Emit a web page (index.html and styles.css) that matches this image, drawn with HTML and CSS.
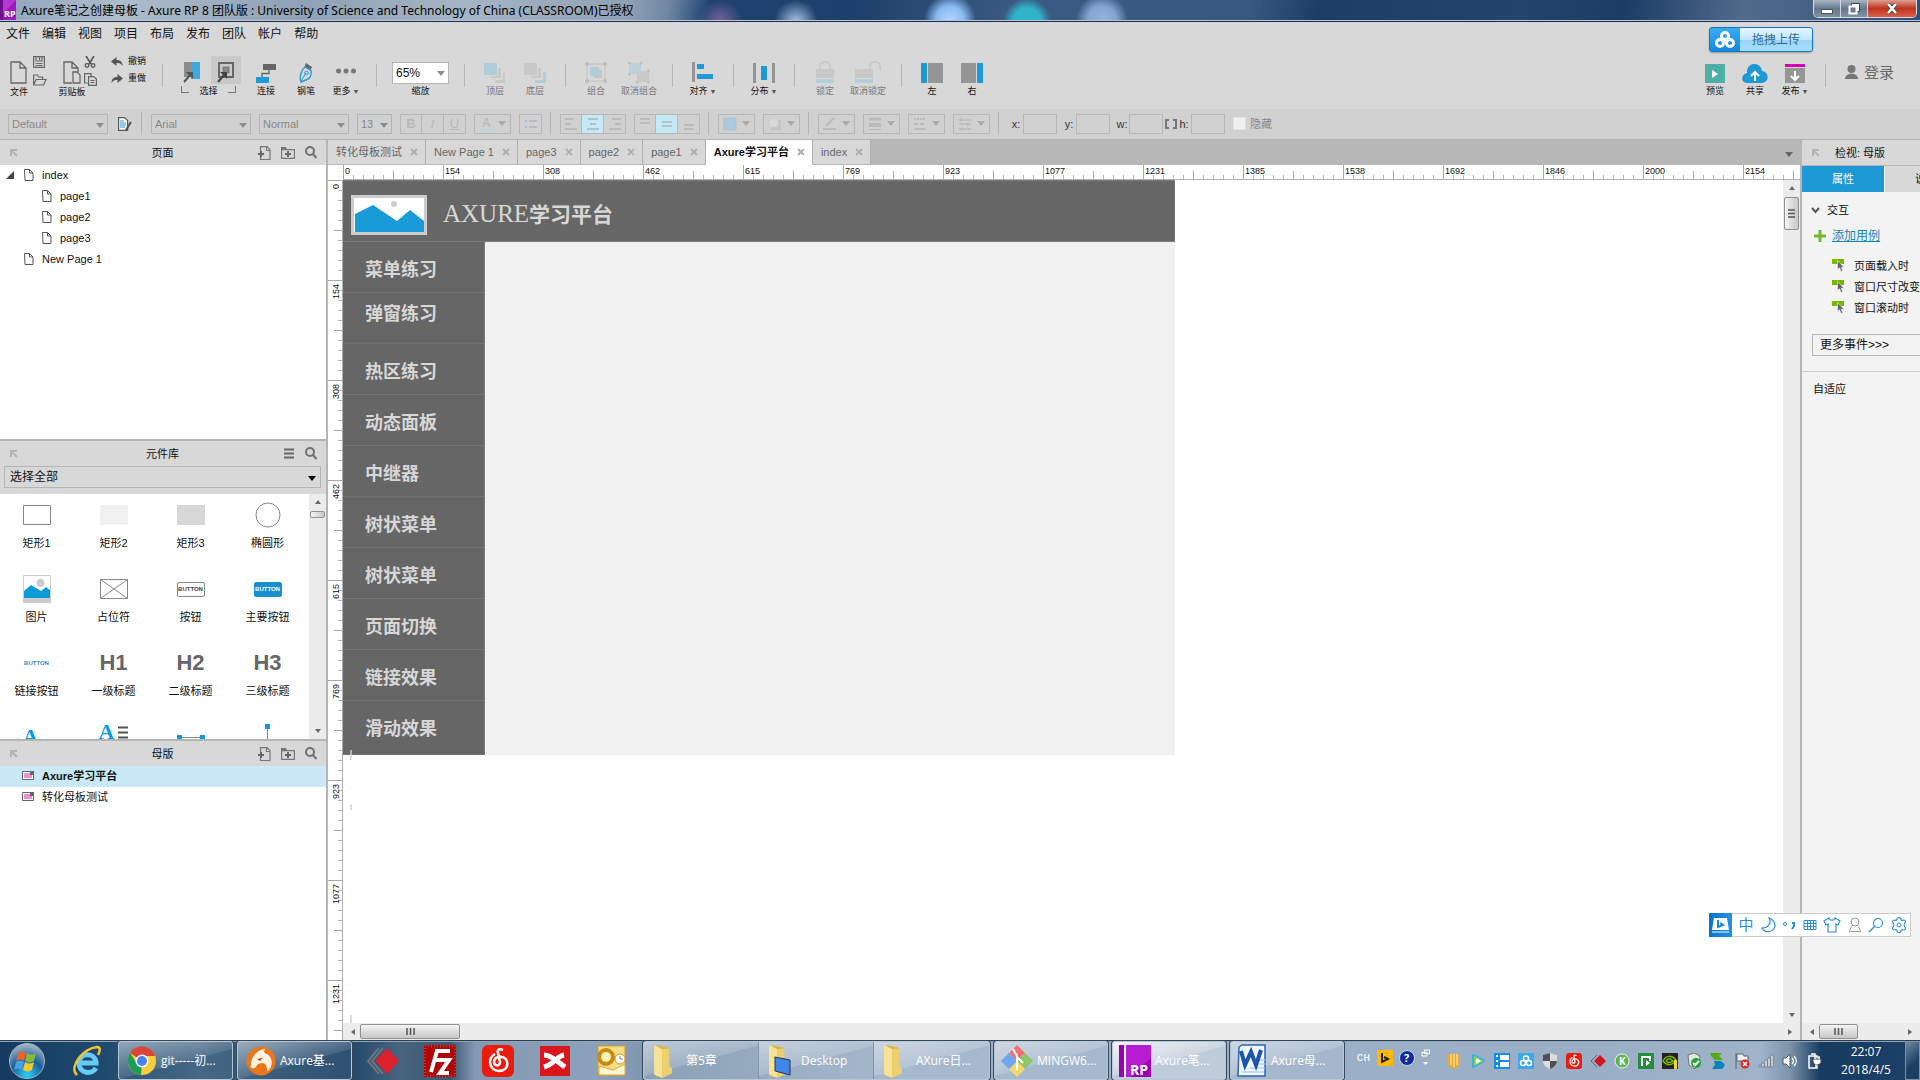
FILE: index.html
```html
<!DOCTYPE html>
<html lang="zh-CN">
<head>
    <meta charset="UTF-8">
    <meta name="viewport" content="width=device-width, initial-scale=1.0">
    <title>Axure笔记之创建母板 - Axure RP 8 团队版</title>
    <link rel="stylesheet" href="styles.css">
</head>
<body>
    <!-- shared icons -->
    <svg class="defs" width="0" height="0" aria-hidden="true">
        <symbol id="i-page" viewBox="0 0 10 12"><path d="M.5 .5h5l3.500 3.500v7.500h-8zM5.500 .5v3.500h3.500" fill="#fff" stroke="#555"/></symbol>
        <symbol id="i-master" viewBox="0 0 12 9"><path d="M.5 .5h11v8H.5z" fill="#fff" stroke="#666"/><path d="M2 2h6l2 2v3H2z" fill="#ee8fd8"/><path d="M8 0v4h4V0z" fill="#666"/></symbol>
        <symbol id="i-search" viewBox="0 0 12 13"><circle cx="5" cy="5" r="4" fill="none" stroke="#707070" stroke-width="2"/><path d="M8 8l3.500 4" stroke="#707070" stroke-width="2.200"/></symbol>
        <symbol id="i-addpage" viewBox="0 0 13 14"><path d="M2.500 5V.6h6.500l3 3v9.900H2.500V11M8.500 1v3.500H12" fill="none" stroke="#777" stroke-width="1.200"/><path d="M0 8h6M3 5v6" stroke="#666" stroke-width="2"/></symbol>
        <symbol id="i-addfolder" viewBox="0 0 14 12"><path d="M.6 11.400V2.600h12.800v8.800z" fill="none" stroke="#777" stroke-width="1.200"/><path d="M0 0h5l1 2.500H0z" fill="#777"/><path d="M4 7h6M7 4v6" stroke="#666" stroke-width="2"/></symbol>
        <symbol id="i-pin" viewBox="0 0 8 8"><path d="M1 7V1h6M1.500 1.500L7 7" fill="none" stroke="#b4b4b4" stroke-width="2"/></symbol>
        <symbol id="i-close" viewBox="0 0 8 8"><path d="M1 1l6 6M7 1L1 7" stroke="#b0b0b0" stroke-width="2"/></symbol>
        <symbol id="i-event" viewBox="0 0 13 13"><path d="M0 0h12v5H0z" fill="#77b800"/><path d="M5.500 1.500v9l2-1.800 1.500 3.800 1.800-.8-1.600-3.500h2.800z" fill="#666" stroke="#f3f3f3" stroke-width=".6"/></symbol>
        <symbol id="i-folder" viewBox="0 0 24 38"><path d="M5 1l13 3v27l-6 5L4 37z" fill="#d9b653"/><path d="M2 1l9 5v32l-9-4z" fill="#f7e398"/><path d="M11 6l8-1v20l3 2v6l-11 5z" fill="#eccf70"/></symbol>
        <symbol id="i-netease" viewBox="0 0 32 32"><rect width="32" height="32" rx="6" fill="#ea1c0d"/><path d="M21 5c-4-2-6 0-5 3l2 9c0 5-6 4-6 0s4-6 8-5c8 2 7 14-3 14S5 13 13 9" fill="none" stroke="#fff" stroke-width="2.500"/></symbol>
    </svg>

    <header class="titlebar">
        <svg width="16" height="20" viewBox="0 0 16 20"><path d="M0 0h16v20H0z" fill="#9a1cb8"/><path d="M0 0h3v20H0z" fill="#6d0f8c"/><path d="M3 0h13l-13 14z" fill="#b936d4"/><text x="4" y="17" font-size="9" font-weight="bold" fill="#fff">RP</text></svg>
        <h1>Axure笔记之创建母板 - Axure RP 8 团队版 : University of Science and Technology of China (CLASSROOM)已授权</h1>
        <div class="window-btns">
            <button aria-label="最小化"><svg width="12" height="12"><rect x=".5" y="6.500" width="11" height="4" fill="#fff" stroke="#555"/></svg></button>
            <button aria-label="还原"><svg width="12" height="12"><path d="M3.500 3V.5h8v8H9" fill="#fff" stroke="#444"/><rect x="1.500" y="3.500" width="7" height="7" fill="#667a92" stroke="#fff" stroke-width="2"/></svg></button>
            <button class="close" aria-label="关闭"><svg width="12" height="11"><path d="M2 1l8 9M10 1L2 10" stroke="#444" stroke-width="4"/><path d="M2 1l8 9M10 1L2 10" stroke="#fff" stroke-width="2.500"/></svg></button>
        </div>
    </header>

    <nav class="menu">
        <a href="#">文件</a><a href="#">编辑</a><a href="#">视图</a><a href="#">项目</a><a href="#">布局</a><a href="#">发布</a><a href="#">团队</a><a href="#">帐户</a><a href="#">帮助</a>
    </nav>

    <div class="toolbar">
        <div class="file-tools">
            <button class="tool big">
                <svg width="18" height="24" viewBox="0 0 18 24"><path d="M1 1h9l6 6v15H1zM10 1v6h6" fill="none" stroke="#666" stroke-width="1.300"/></svg>
                <span>文件</span>
            </button>
            <div class="mini">
                <button aria-label="保存"><svg width="12" height="12"><path d="M.6 .6h10.800v10.800H.6zM3 1v4h6V1M6.500 1v3M2.500 7.500h7M2.500 9.500h7" fill="none" stroke="#666" stroke-width="1.200"/></svg></button>
                <button aria-label="打开"><svg width="14" height="12"><path d="M.6 11V1h4l1 2h4v2.500M.6 11l2.500-5.500h10L10.500 11z" fill="none" stroke="#666" stroke-width="1.200"/></svg></button>
            </div>
            <button class="tool big clip">
                <svg width="18" height="24" viewBox="0 0 18 24"><path d="M9 22H1V1h8l6 6v4M9 1v6h6M10 11h4l3 3v8h-7z" fill="none" stroke="#666" stroke-width="1.300"/></svg>
                <span>剪贴板</span>
            </button>
            <div class="mini">
                <button aria-label="剪切"><svg width="12" height="12"><path d="M2 0l5 8M10 0L5 8" stroke="#555" stroke-width="1.600"/><circle cx="3" cy="9.500" r="1.800" fill="none" stroke="#555" stroke-width="1.300"/><circle cx="9" cy="9.500" r="1.800" fill="none" stroke="#555" stroke-width="1.300"/></svg></button>
                <button aria-label="复制"><svg width="13" height="13"><path d="M4 10H.6V.6h6.500V3M4.600 3.600h5l2.800 2.500v6.300H4.600zM6.500 7.500h4M6.500 9.500h4" fill="none" stroke="#666" stroke-width="1.200"/></svg></button>
            </div>
            <div class="undo">
                <button><svg width="12" height="10"><path d="M0 4.500L5.500 0v3c4 0 6 2 6 6-1.500-2.500-3-3-6-3v3z" fill="#555"/></svg>撤销</button>
                <button><svg width="12" height="10"><path d="M12 4.500L6.500 0v3c-4 0-6 2-6 6 1.500-2.500 3-3 6-3v3z" fill="#555"/></svg>重做</button>
            </div>
        </div>
        <i class="sep"></i>
        <div class="select-tools">
            <div class="pair">
                <button aria-label="相交选择"><svg width="18" height="24" viewBox="0 0 18 24"><path d="M1 2h7v15H1z" fill="#8c8c8c"/><path d="M8 2h9v17H8z" fill="#3fa9dc"/><path d="M1 22l7-8" stroke="#555" stroke-width="2"/><path d="M3 12h7v7z" fill="#555"/></svg></button>
                <button class="on" aria-label="包含选择"><svg width="18" height="24" viewBox="0 0 18 24"><path d="M2 3h14v14H2z" fill="none" stroke="#666" stroke-width="2"/><path d="M6 7h6v6H6z" fill="#888" stroke="#777"/><path d="M1 22l7-8" stroke="#444" stroke-width="2"/><path d="M3 12h7v7z" fill="#444"/></svg></button>
            </div>
            <div class="pair-label"><i></i>选择<i class="r"></i></div>
        </div>
        <button class="tool"><svg width="20" height="24" viewBox="0 0 20 24"><path d="M7 3h13v6H7z" fill="#666"/><path d="M0 16h13v6H0z" fill="#1d9ad6"/><path d="M13 9v3.500H6V16" fill="none" stroke="#666" stroke-width="1.300"/></svg><span>连接</span></button>
        <button class="tool"><svg width="16" height="24" viewBox="0 0 16 24"><path d="M8 2l6 4-1.500 3-6-3.500z" fill="#666"/><path d="M7 6l6 3.500c1 4-1 8-4 9L3 21c-2-5 0-12 4-15z" fill="none" stroke="#2a9bd2" stroke-width="1.400"/><path d="M3 20l5-8" stroke="#2a9bd2"/><circle cx="8.500" cy="12" r="1.800" fill="none" stroke="#2a9bd2"/></svg><span>钢笔</span></button>
        <button class="tool"><svg width="20" height="24" viewBox="0 0 20 24"><g fill="#777"><circle cx="2.500" cy="10" r="2.500"/><circle cx="10" cy="10" r="2.500"/><circle cx="17.500" cy="10" r="2.500"/></g></svg><span>更多<b>▼</b></span></button>
        <i class="sep"></i>
        <div class="zoom">
            <div class="pick"><select id="zoom"><option>65%</option></select></div>
            <label for="zoom">缩放</label>
        </div>
        <i class="sep"></i>
        <button class="tool" disabled><svg width="22" height="24" viewBox="0 0 22 24"><path d="M0 2h13v12H0z" fill="#b1cdda"/><path d="M14 7h3v10H7v-2h7zM19 12h2v10H11v-3h8z" fill="#c8c8c8"/></svg><span>顶层</span></button>
        <button class="tool" disabled><svg width="22" height="24" viewBox="0 0 22 24"><path d="M0 2h13v12H0zM14 7h3v10H7v-2h7z" fill="#c8c8c8"/><path d="M19 11h3v11H11v-3h8z" fill="#b1cdda"/></svg><span>底层</span></button>
        <i class="sep"></i>
        <button class="tool" disabled><svg width="22" height="24" viewBox="0 0 22 24"><path d="M2 3h18v17H2z" fill="none" stroke="#c0c0c0"/><path d="M9 9h8v8H9z" fill="#c6c6c6"/><path d="M5 6h9v9H5z" fill="#b1cdda"/><g fill="#bcbcbc"><circle cx="2" cy="3" r="2"/><circle cx="20" cy="3" r="2"/><circle cx="2" cy="20" r="2"/><circle cx="20" cy="20" r="2"/></g></svg><span>组合</span></button>
        <button class="tool wide" disabled><svg width="22" height="24" viewBox="0 0 22 24"><path d="M1 2h12v11H1z" fill="#bdd1da"/><path d="M9 10h12v11H9z" fill="#c9c9c9"/><g fill="#bfbfbf"><circle cx="1.500" cy="2" r="1.500"/><circle cx="13" cy="2" r="1.500"/><circle cx="1.500" cy="13" r="1.500"/><circle cx="9" cy="21" r="1.500"/><circle cx="20.500" cy="10" r="1.500"/><circle cx="20.500" cy="21" r="1.500"/></g></svg><span>取消组合</span></button>
        <i class="sep"></i>
        <button class="tool"><svg width="22" height="24" viewBox="0 0 22 24"><path d="M0 1h3v20H0z" fill="#959595"/><path d="M5 3h7v5H5zM5 13h16v5H5z" fill="#1d9ad6"/></svg><span>对齐<b>▼</b></span></button>
        <i class="sep"></i>
        <button class="tool"><svg width="22" height="24" viewBox="0 0 22 24"><path d="M0 2h3v20H0zM19 2h3v20h-3z" fill="#959595"/><path d="M8 5h6v14H8z" fill="#1d9ad6"/></svg><span>分布<b>▼</b></span></button>
        <i class="sep"></i>
        <button class="tool" disabled><svg width="18" height="24" viewBox="0 0 18 24"><path d="M4 9V6c0-7 10-7 10 0v3" fill="none" stroke="#cacaca" stroke-width="2"/><path d="M0 8h18v9H0z" fill="#c8c8c8"/><path d="M0 18h18v4H0z" fill="#b3cdd9"/></svg><span>锁定</span></button>
        <button class="tool wide" disabled><svg width="26" height="24" viewBox="0 0 26 24"><path d="M15 9V6c0-7 10-7 10 0v3" fill="none" stroke="#cacaca" stroke-width="2"/><path d="M0 8h18v9H0z" fill="#c8c8c8"/><path d="M0 18h18v4H0z" fill="#b3cdd9"/></svg><span>取消锁定</span></button>
        <i class="sep"></i>
        <button class="tool"><svg width="22" height="24" viewBox="0 0 22 24"><path d="M0 2h6v20H0z" fill="#1d9ad6"/><path d="M7 2h15v20H7z" fill="#959595"/></svg><span>左</span></button>
        <button class="tool"><svg width="22" height="24" viewBox="0 0 22 24"><path d="M16 2h6v20h-6z" fill="#1d9ad6"/><path d="M0 2h15v20H0z" fill="#959595"/></svg><span>右</span></button>

        <div class="share-tools">
            <button class="tool"><svg width="20" height="24" viewBox="0 0 20 24"><path d="M0 3h20v19H0z" fill="#4dafa5"/><path d="M7 9l6 4-6 4z" fill="#fff"/></svg><span>预览</span></button>
            <button class="tool"><svg width="26" height="24" viewBox="0 0 26 24"><path d="M6 22c-8 0-7-9-1-10C4 1 19 0 20 10c8 1 7 12 0 12z" fill="#1d9ad6"/><path d="M13 20v-9m-4 4l4-4 4 4" fill="none" stroke="#fff" stroke-width="2"/></svg><span>共享</span></button>
            <button class="tool"><svg width="20" height="24" viewBox="0 0 20 24"><path d="M0 3h20v3H0z" fill="#d400b5"/><path d="M0 7h20v15H0z" fill="#959595"/><path d="M10 10v8m-4-3l4 4 4-4" fill="none" stroke="#fff" stroke-width="2"/></svg><span>发布<b>▼</b></span></button>
            <i class="sep"></i>
            <a class="login" href="#"><svg width="13" height="14"><circle cx="6.500" cy="4" r="4" fill="#777"/><path d="M0 14c0-7 13-7 13 0z" fill="#777"/></svg>登录</a>
        </div>
    </div>

    <div class="stylebar">
        <div class="pick w100"><select aria-label="样式" disabled><option>Default</option></select></div>
        <button class="plain" aria-label="管理样式"><svg width="14" height="14"><path d="M.6 .6h6l3 3v9.800h-9z" fill="#fff" stroke="#555" stroke-width="1.200"/><path d="M2 4h4M2 6h6M2 8h6M2 10h5" stroke="#2a9bd2"/><path d="M8 13l5-8" stroke="#555" stroke-width="2"/></svg></button>
        <i class="sep"></i>
        <div class="pick w100"><select aria-label="字体" disabled><option>Arial</option></select></div>
        <div class="pick w90"><select aria-label="字形" disabled><option>Normal</option></select></div>
        <div class="pick w35"><select aria-label="字号" disabled><option>13</option></select></div>
        <div class="group"><button disabled><b>B</b></button><button disabled><em>I</em></button><button disabled><u>U</u></button></div>
        <button class="drop" disabled aria-label="字体颜色"><svg width="16" height="14"><text x="3" y="10" font-size="12" font-weight="bold" fill="#b9b9b9">A</text><path d="M1 12h13v2H1z" fill="#bdd4e0"/></svg></button>
        <div class="group"><button disabled aria-label="列表"><svg width="14" height="12"><path d="M1 3h2M1 9h2" stroke="#9cc3d8" stroke-width="2"/><path d="M5 3h8M5 9h8" stroke="#bbb" stroke-width="2"/></svg></button></div>
        <i class="sep"></i>
        <div class="group">
            <button disabled aria-label="左对齐"><svg width="14" height="14"><path d="M1 2h9M1 7h6M1 12h12" stroke="#bbb" stroke-width="2"/></svg></button>
            <button disabled class="on" aria-label="居中"><svg width="14" height="14"><path d="M2 2h10M4 7h6M1 12h12" stroke="#abc3cd" stroke-width="2"/></svg></button>
            <button disabled aria-label="右对齐"><svg width="14" height="14"><path d="M4 2h9M7 7h6M1 12h12" stroke="#bbb" stroke-width="2"/></svg></button>
        </div>
        <div class="group">
            <button disabled aria-label="顶部"><svg width="12" height="14"><path d="M1 2h10M1 6h10" stroke="#bbb" stroke-width="2"/></svg></button>
            <button disabled class="on" aria-label="中部"><svg width="12" height="14"><path d="M1 5h10M1 9h10" stroke="#abc3cd" stroke-width="2"/></svg></button>
            <button disabled aria-label="底部"><svg width="12" height="14"><path d="M1 8h10M1 12h10" stroke="#bbb" stroke-width="2"/></svg></button>
        </div>
        <i class="sep"></i>
        <button class="drop" disabled aria-label="填充"><svg width="14" height="14"><path d="M1 1h12v12H1z" fill="#a9c9e2" stroke="#bbb"/></svg></button>
        <button class="drop" disabled aria-label="阴影"><svg width="14" height="14"><path d="M3 3h10v10H3z" fill="#c4c4c4"/><path d="M1 1h9v9H1z" fill="#d8d8d8" stroke="#ccc"/></svg></button>
        <i class="sep"></i>
        <button class="drop" disabled aria-label="线条颜色"><svg width="14" height="14"><path d="M3 9l8-8" stroke="#bbb" stroke-width="2"/><path d="M0 11h13v2H0z" fill="#bbb"/></svg></button>
        <button class="drop" disabled aria-label="线宽"><svg width="14" height="14"><path d="M1 2h12" stroke="#bbb" stroke-width="3"/><path d="M1 8h12" stroke="#bbb" stroke-width="4"/><path d="M1 12.500h12" stroke="#bbb"/></svg></button>
        <button class="drop" disabled aria-label="线型"><svg width="14" height="14"><path d="M1 2h12" stroke="#bbb" stroke-width="2" stroke-dasharray="2 1"/><path d="M1 7h12" stroke="#bbb" stroke-width="2" stroke-dasharray="4 2"/><path d="M1 12h12" stroke="#bbb" stroke-width="2"/></svg></button>
        <button class="drop" disabled aria-label="箭头"><svg width="14" height="14"><path d="M1 3h12M1 7h12M1 12h12M3 1v4M10 5v5M4 10v4" stroke="#bbb" stroke-width="1.300"/></svg></button>
        <i class="sep"></i>
        <div class="coord"><label for="px">x:</label><input id="px" type="text" disabled></div>
        <div class="coord"><label for="py">y:</label><input id="py" type="text" disabled></div>
        <div class="coord"><label for="pw">w:</label><input id="pw" type="text" disabled></div>
        <div class="coord last"><svg width="12" height="10"><path d="M4 1H1v8h3M8 1h3v8H8" fill="none" stroke="#777" stroke-width="2"/></svg><label for="ph">h:</label><input id="ph" type="text" disabled></div>
        <label class="hide"><input type="checkbox" disabled>隐藏</label>
    </div>

    <div class="workspace">
        <aside class="left">
            <section class="pane pages">
                <div class="pane-head"><svg width="8" height="8"><use href="#i-pin"/></svg><h2>页面</h2><div class="pane-icons"><svg width="13" height="14"><use href="#i-addpage"/></svg><svg width="14" height="12"><use href="#i-addfolder"/></svg><svg width="12" height="13"><use href="#i-search"/></svg></div></div>
                <ul class="tree">
                    <li><svg class="twisty" width="8" height="8"><path d="M8 0v8H0z" fill="#444"/></svg><svg width="10" height="12"><use href="#i-page"/></svg>index</li>
                    <li class="child"><svg width="10" height="12"><use href="#i-page"/></svg>page1</li>
                    <li class="child"><svg width="10" height="12"><use href="#i-page"/></svg>page2</li>
                    <li class="child"><svg width="10" height="12"><use href="#i-page"/></svg>page3</li>
                    <li class="leaf"><svg width="10" height="12"><use href="#i-page"/></svg>New Page 1</li>
                </ul>
            </section>
            <section class="pane library">
                <div class="pane-head"><svg width="8" height="8"><use href="#i-pin"/></svg><h2>元件库</h2><div class="pane-icons"><svg width="12" height="11"><path d="M1 1.500h10M1 5.500h10M1 9.500h10" stroke="#666" stroke-width="2"/></svg><svg width="12" height="13"><use href="#i-search"/></svg></div></div>
                <div class="pick lib-pick"><select aria-label="元件库"><option>选择全部</option></select></div>
                <div class="lib-body">
                    <div class="widgets">
                        <div><svg width="28" height="28"><path d="M.5 4.500h27v19H.5z" fill="#fff" stroke="#888"/></svg>矩形1</div>
                        <div><svg width="28" height="28"><path d="M0 4h28v20H0z" fill="#f1f1f1"/></svg>矩形2</div>
                        <div><svg width="28" height="28"><path d="M0 4h28v20H0z" fill="#d7d7d7"/></svg>矩形3</div>
                        <div><svg width="28" height="28"><circle cx="14" cy="14" r="12" fill="#fff" stroke="#888"/></svg>椭圆形</div>
                        <div><svg width="28" height="28"><path d="M.5 .5h27v27H.5z" fill="#fff" stroke="#ccc"/><circle cx="17.500" cy="8" r="4" fill="#ccc"/><path d="M1 16l7-6 10 6 5-4 4 3v8H1z" fill="#0a9bd8"/><path d="M0 23h28v5H0z" fill="#ccc"/></svg>图片</div>
                        <div><svg width="28" height="28"><path d="M.5 4.500h27v19H.5zM.5 4.500l27 19M27.500 4.500l-27 19" fill="#fff" stroke="#888"/></svg>占位符</div>
                        <div><span class="ico"><i class="mini-btn">BUTTON</i></span>按钮</div>
                        <div><span class="ico"><i class="mini-btn primary">BUTTON</i></span>主要按钮</div>
                        <div><span class="ico"><i class="mini-btn link">BUTTON</i></span>链接按钮</div>
                        <div><span class="ico hd">H1</span>一级标题</div>
                        <div><span class="ico hd">H2</span>二级标题</div>
                        <div><span class="ico hd">H3</span>三级标题</div>
                        <div><span class="ico letter low">A</span></div>
                        <div><span class="ico letter">A<svg width="10" height="13"><path d="M0 1.500h10M0 6.500h10M0 11.500h10" stroke="#555" stroke-width="2"/></svg></span></div>
                        <div><svg width="28" height="28"><path d="M2 14.500h24" stroke="#888"/><path d="M0 12h5v5H0zM23 12h5v5h-5z" fill="#0a9bd8"/></svg></div>
                        <div><svg width="28" height="28"><path d="M13.500 3v25" stroke="#888"/><path d="M11 1h5v5h-5z" fill="#0a9bd8"/></svg></div>
                    </div>
                    <div class="vscroll"><svg width="6" height="4"><path d="M0 4l3-4 3 4z" fill="#666"/></svg><i class="thumb tiny"></i><svg class="end" width="6" height="4"><path d="M0 0l3 4 3-4z" fill="#666"/></svg></div>
                </div>
            </section>
            <section class="pane masters">
                <div class="pane-head"><svg width="8" height="8"><use href="#i-pin"/></svg><h2>母版</h2><div class="pane-icons"><svg width="13" height="14"><use href="#i-addpage"/></svg><svg width="14" height="12"><use href="#i-addfolder"/></svg><svg width="12" height="13"><use href="#i-search"/></svg></div></div>
                <ul class="tree">
                    <li class="leaf current"><svg width="12" height="9"><use href="#i-master"/></svg>Axure学习平台</li>
                    <li class="leaf"><svg width="12" height="9"><use href="#i-master"/></svg>转化母板测试</li>
                </ul>
            </section>
        </aside>

        <main class="editor">
            <div class="tabs">
                <div class="tab">转化母板测试<svg width="8" height="8"><use href="#i-close"/></svg></div>
                <div class="tab">New Page 1<svg width="8" height="8"><use href="#i-close"/></svg></div>
                <div class="tab">page3<svg width="8" height="8"><use href="#i-close"/></svg></div>
                <div class="tab">page2<svg width="8" height="8"><use href="#i-close"/></svg></div>
                <div class="tab">page1<svg width="8" height="8"><use href="#i-close"/></svg></div>
                <div class="tab active">Axure学习平台<svg width="8" height="8"><use href="#i-close"/></svg></div>
                <div class="tab">index<svg width="8" height="8"><use href="#i-close"/></svg></div>
                <svg class="more" width="8" height="5"><path d="M0 0h8L4 5z" fill="#666"/></svg>
            </div>
            <div class="hruler"><span>0</span><span>154</span><span>308</span><span>462</span><span>615</span><span>769</span><span>923</span><span>1077</span><span>1231</span><span>1385</span><span>1538</span><span>1692</span><span>1846</span><span>2000</span><span>2154</span></div>
            <div class="stage">
                <div class="vruler"><span>0</span><span>154</span><span>308</span><span>462</span><span>615</span><span>769</span><span>923</span><span>1077</span><span>1231</span></div>
                <div class="scroller">
                    <div class="canvas-row">
                        <div class="canvas">
                            <div class="design">
                                <div class="design-head">
                                    <svg width="76" height="40"><path d="M1.500 1.500h73v37h-73z" fill="#fff" stroke="#ccc" stroke-width="3"/><path d="M4 19l18-9 24 16 13-11 14 11v11H4z" fill="#189bd6"/><circle cx="43" cy="9" r="3" fill="#ccc"/></svg>
                                    <h3><span>AXURE</span>学习平台</h3>
                                </div>
                                <div class="design-body">
                                    <ul>
                                        <li>菜单练习</li>
                                        <li class="raised">弹窗练习</li>
                                        <li>热区练习</li>
                                        <li>动态面板</li>
                                        <li>中继器</li>
                                        <li>树状菜单</li>
                                        <li>树状菜单</li>
                                        <li>页面切换</li>
                                        <li>链接效果</li>
                                        <li>滑动效果</li>
                                    </ul>
                                </div>
                            </div>
                            <svg class="guide" width="2" height="280"><path d="M1 0v5" stroke="#fff"/><path d="M1 5v5M1 54v6M1 265v8" stroke="#bbb"/></svg>
                        </div>
                        <div class="vscroll"><svg width="6" height="4"><path d="M0 4l3-4 3 4z" fill="#666"/></svg><i class="thumb tall"><svg width="7" height="9"><path d="M0 1h7M0 4.500h7M0 8h7" stroke="#555" stroke-width="1.500"/></svg></i><svg class="end" width="6" height="4"><path d="M0 0l3 4 3-4z" fill="#666"/></svg></div>
                    </div>
                    <div class="hscroll"><svg width="4" height="6"><path d="M4 0v6L0 3z" fill="#666"/></svg><i class="thumb long"><svg width="9" height="7"><path d="M1 0v7M4.500 0v7M8 0v7" stroke="#555" stroke-width="1.500"/></svg></i><svg class="end" width="4" height="6"><path d="M0 0v6l4-3z" fill="#666"/></svg></div>
                </div>
            </div>
        </main>

        <aside class="inspector">
            <div class="pane-head"><svg width="8" height="8"><use href="#i-pin"/></svg><h2>检视: 母版</h2></div>
            <div class="insp-tabs"><button class="on">属性</button><button>说明</button></div>
            <div class="insp-body">
                <h3><svg width="9" height="7"><path d="M1 1l3.500 4L8 1" fill="none" stroke="#555" stroke-width="2"/></svg>交互</h3>
                <p class="add"><svg width="12" height="12"><path d="M0 6h12M6 0v12" stroke="#76b82a" stroke-width="3"/></svg><a href="#">添加用例</a></p>
                <ul>
                    <li><svg width="13" height="13"><use href="#i-event"/></svg>页面载入时</li>
                    <li><svg width="13" height="13"><use href="#i-event"/></svg>窗口尺寸改变时</li>
                    <li><svg width="13" height="13"><use href="#i-event"/></svg>窗口滚动时</li>
                </ul>
                <button class="events">更多事件&gt;&gt;&gt;</button>
                <h4>自适应</h4>
            </div>
            <div class="hscroll"><svg width="4" height="6"><path d="M4 0v6L0 3z" fill="#666"/></svg><i class="thumb short"><svg width="9" height="7"><path d="M1 0v7M4.500 0v7M8 0v7" stroke="#555" stroke-width="1.500"/></svg></i><svg class="end" width="4" height="6"><path d="M0 0v6l4-3z" fill="#666"/></svg></div>
        </aside>
    </div>

    <footer class="taskbar">
        <button class="launch start" aria-label="开始"><svg width="38" height="38"><defs><radialGradient id="orb" cx=".5" cy=".9" r=".9"><stop offset="0" stop-color="#2bd0ff"/><stop offset=".5" stop-color="#1b5f98"/><stop offset="1" stop-color="#a9bccb"/></radialGradient></defs><circle cx="19" cy="19" r="17.500" fill="url(#orb)" stroke="#9fb6c8"/><path d="M10 11c3-2 5-2 8 0l-2 8c-3-2-5-2-8 0z" fill="#e8622c"/><path d="M19 11c3 2 6 2 9 0l-2 8c-3 2-6 2-9 0z" fill="#86b93c"/><path d="M8 20c3-2 5-2 8 0l-2 8c-3-2-5-2-8 0z" fill="#4aa3e0"/><path d="M17 20c3 2 6 2 9 0l-2 8c-3 2-6 2-9 0z" fill="#f5c62d"/></svg></button>
        <button class="launch ie" aria-label="Internet Explorer"><svg width="30" height="32"><path d="M24 23c-4 7-17 6-17-5s17-11 17 0H8" fill="none" stroke="#67caf6" stroke-width="5"/><path d="M5 30C-4 22 12 3 25 2c4 0 3 4 1 8" fill="none" stroke="#f0c62c" stroke-width="2.500"/></svg></button>
        <button class="task"><svg width="30" height="32" viewBox="0 0 30 32"><circle cx="15" cy="16" r="14" fill="#f9cd3b"/><path d="M15 16L3 8c6-10 22-8 25 3H15z" fill="#dc4437"/><path d="M15 16l-1 14C2 29-2 16 3 8l6 9z" fill="#1c9c57"/><circle cx="15" cy="16" r="6.500" fill="#fff"/><circle cx="15" cy="16" r="5" fill="#4683ea"/></svg><span>git-----初...</span></button>
        <button class="task"><svg width="30" height="32" viewBox="0 0 32 34"><circle cx="16" cy="17" r="15.500" fill="#e8781e"/><path d="M5 23C5 12 12 5 21 4c-3 3-2 4 2 6 6 4 6 13 0 18-1-5-1-8-5-9l-5 1-3 4-3 1z" fill="#fff3df"/><path d="M12 15l6-2-3 4z" fill="#bd5008"/></svg><span>Axure基...</span></button>
        <button class="launch diamond" aria-label="Git"><svg width="34" height="34"><path d="M13 4L2 17l11 13M17 4L6 17l11 13" fill="none" stroke="#68747f" stroke-width="2"/><path d="M21 4l12 13-12 13L9 17z" fill="#dc202c"/></svg></button>
        <button class="launch" aria-label="FileZilla"><svg width="32" height="32"><path d="M0 0h32v32H0z" fill="#ad0707"/><path d="M1 1h30v30H1z" fill="none" stroke="#d66" stroke-dasharray="1 2"/><path d="M7 27l6-21h13M10 15h10M16 15h9l-9 13h9" fill="none" stroke="#fff" stroke-width="4"/></svg></button>
        <button class="launch" aria-label="网易云音乐"><svg width="32" height="32"><use href="#i-netease"/></svg></button>
        <button class="launch" aria-label="XMind"><svg width="30" height="30"><path d="M0 0h30v30H0z" fill="#d9161b"/><path d="M4 9c8 0 15 8 21 12M24 9c-7 1-10 9-20 12" fill="none" stroke="#fff" stroke-width="5"/></svg></button>
        <button class="launch" aria-label="Outlook"><svg width="30" height="32"><path d="M2 1h27v29H2z" fill="#f7df8a" stroke="#d39b1f"/><circle cx="10" cy="12" r="7" fill="#fff2b8" stroke="#c98a12" stroke-width="4"/><path d="M3 21l14 4 12-6v11H3z" fill="#fff6d0" stroke="#d7a93c"/><circle cx="24" cy="14" r="5" fill="#fff" stroke="#d0952a"/><path d="M24 11v3h3" fill="none" stroke="#888"/></svg></button>
        <div class="task-group">
            <button class="task light"><svg width="26" height="34"><use href="#i-folder"/></svg><span>第5章</span></button>
            <button class="task light"><svg width="26" height="34"><use href="#i-folder"/><path d="M10 13l15 3v15l-15-4z" fill="#3f86e8" stroke="#26374d"/></svg><span>Desktop</span></button>
            <button class="task light"><svg width="26" height="34"><use href="#i-folder"/></svg><span>AXure日...</span></button>
        </div>
        <button class="task light"><svg width="32" height="34" viewBox="0 0 32 34"><path d="M16 1l8 8-8 8-8-8z" fill="#f27070"/><path d="M24 9l8 8-8 8-8-8z" fill="#8cc667"/><path d="M16 17l8 8-8 8-8-8z" fill="#f5d76d"/><path d="M8 9l8 8-8 8-8-8z" fill="#6fa6ee"/><path d="M12 5l4 7v14M16 13l6 6" fill="none" stroke="#fff" stroke-width="2"/></svg><span>MINGW6...</span></button>
        <button class="task light current"><svg width="32" height="34" viewBox="0 0 32 34"><path d="M0 1h32v32H0z" fill="#9c00b5"/><path d="M6 1h26v13L12 33H6z" fill="#b71bd2"/><path d="M6 1v32" stroke="#fff" stroke-width="2"/><text x="11" y="31" font-size="14" font-weight="bold" fill="#fff">RP</text></svg><span>Axure笔...</span></button>
        <button class="task light"><svg width="30" height="34" viewBox="0 0 30 34"><path d="M2 3l3-2h23v31H1z" fill="#eef5ff" stroke="#2d67ac" stroke-width="1.500"/><path d="M18 16h11M18 20h11M12 24h16M5 28h22" stroke="#9dc0e6"/><path d="M4 7l4 14 6-13 5 13 5-15" fill="none" stroke="#1d55a8" stroke-width="4"/></svg><span>Axure母...</span></button>

        <div class="tray">
            <span class="lang">CH</span>
            <svg width="16" height="16" class="up"><path d="M0 0h16v16H0z" fill="#fdb80a"/><path d="M5 3v9l6-3-4-2" fill="none" stroke="#222" stroke-width="2"/></svg>
            <svg width="16" height="16" class="up"><circle cx="8" cy="8" r="7.500" fill="#112a9c" stroke="#cdd6e4"/><text x="5" y="12" font-size="11" font-weight="bold" fill="#fff">?</text></svg>
            <svg width="10" height="18" class="up"><path d="M3.500 1h5v3.500h-5zM1 3.500h5V7H1z" fill="none" stroke="#fff"/><path d="M2 13h5l-2.500 3z" fill="#fff"/></svg>
            <div class="tray-icons">
                <svg width="16" height="16"><path d="M2 1h12v9c0 4-4 5-6 6-2-1-6-2-6-6z" fill="#eaaa35"/><path d="M5 1v11M8 1v13M11 1v11" stroke="#fff1bd"/></svg>
                <svg width="16" height="16"><path d="M2 1c0-1 14 5 13 7S2 16 2 15z" fill="#34b2e9"/><path d="M4 3l10 5-10 5z" fill="#91cf43"/><path d="M6 5l5 3-5 3z" fill="#fff"/></svg>
                <svg width="16" height="16"><path d="M0 0h16v16H0z" fill="#118dee"/><path d="M2 2h2v2H2zM2 7h2v2H2zM2 12h2v2H2zM6 2h9v5H6zM6 9h9v5H6z" fill="#fff"/></svg>
                <svg width="16" height="16"><path d="M0 0h16v16H0z" fill="#3da8e9"/><g fill="none" stroke="#fff" stroke-width="1.500"><circle cx="8" cy="5.500" r="2.500"/><circle cx="5" cy="10" r="2.500"/><circle cx="11" cy="10" r="2.500"/></g></svg>
                <svg width="16" height="16"><path d="M8 0l7 2v6c0 4-4 7-7 8-3-1-7-4-7-8V2z" fill="#ddd"/><path d="M8 0v8H1V2zM8 8h7c0 4-4 7-7 8z" fill="#4d5156"/></svg>
                <svg width="16" height="16"><use href="#i-netease"/></svg>
                <svg width="16" height="16"><path d="M7 2L1 8l6 6" fill="none" stroke="#666"/><path d="M10 2l6 6-6 6-6-6z" fill="#d3151f"/></svg>
                <svg width="16" height="16"><circle cx="8" cy="8" r="7" fill="#5db55a" stroke="#e8fae2"/><text x="5" y="12" font-size="10" font-weight="bold" fill="#fff">K</text></svg>
                <svg width="16" height="16"><path d="M0 0h16v16H0z" fill="#258c40"/><path d="M4 13V4h8v4" fill="none" stroke="#fff" stroke-width="2"/><path d="M8 7l4 3-4 3z" fill="#fff"/></svg>
                <svg width="16" height="16"><path d="M0 0h16v16H0z" fill="#222"/><path d="M1 8c3-6 9-6 13-1-4 6-9 6-13 1zM4 8c2-3 4-3 7 0-3 2-5 2-7 0" fill="none" stroke="#79b900" stroke-width="1.500"/><path d="M12 7h3v9h-3z" fill="#f2d22b"/></svg>
                <svg width="16" height="16"><path d="M2 2l6-2 6 3-1 10-5 3-5-4z" fill="#e1e4df" stroke="#6a7a6c"/><circle cx="10" cy="10" r="5" fill="#25a23b"/><path d="M7 10l2 2 4-4" fill="none" stroke="#fff" stroke-width="2"/></svg>
                <svg width="16" height="16"><path d="M0 0h12l-3 3 4 4H5L1 3z" fill="#57a914"/><path d="M4 8h7l4 4-3 4H2l3-4z" fill="#0584bb"/></svg>
                <svg width="16" height="16"><path d="M2 0v16M3 1h6l1 2h4v7H9L8 8H3z" fill="#e9eef4" stroke="#566"/><circle cx="11" cy="11" r="4.500" fill="#d92a20"/><path d="M9 9l4 4M13 9l-4 4" stroke="#fff" stroke-width="1.500"/></svg>
                <svg width="16" height="16"><path d="M1 12h2v2H1zM4 10h2v4H4zM7 7h2v7H7zM10 5h2v9h-2zM13 2h2v12h-2z" fill="#fff" stroke="#4c5864" stroke-width=".6"/></svg>
                <svg width="16" height="16"><path d="M1 5h3l4-4v14l-4-4H1z" fill="#fff" stroke="#4c5864"/><path d="M10 5c2 2 2 4 0 6M12 3c3 3 3 7 0 10" fill="none" stroke="#fff" stroke-width="1.300"/></svg>
                <svg width="16" height="16"><path d="M3 3h8v12H3zM5 1h4v2" fill="none" stroke="#fff" stroke-width="1.500"/><path d="M7 6h8v4l-3 2H9L7 9z" fill="#fff" stroke="#445"/><path d="M9 3v3M13 3v3M10 12v3" stroke="#fff" stroke-width="1.500"/></svg>
            </div>
            <div class="clock"><time>22:07</time><time>2018/4/5</time></div>
            <button class="show-desktop" aria-label="显示桌面"></button>
        </div>
    </footer>

    <!-- floating windows -->
    <button class="upload"><svg width="30" height="24" viewBox="0 0 30 24"><g fill="none" stroke="#fff" stroke-width="3"><circle cx="15" cy="8" r="3.500"/><circle cx="10" cy="15" r="3.500"/><circle cx="20" cy="15" r="3.500"/></g></svg><span>拖拽上传</span></button>
    <div class="ime">
        <svg class="logo" width="23" height="24"><path d="M5 5h13l2 12H3z" fill="#fff"/><path d="M3 19h17" stroke="#fff"/><path d="M9 7v7l5-2-3-2" fill="none" stroke="#1a83dd" stroke-width="2"/></svg>
        <span>中</span>
        <svg width="16" height="16"><path d="M9 1c3 5-1 10-7 10 3 6 12 4 13-2 0-4-3-7-6-8z" fill="none" stroke="#2a8fe0" stroke-width="1.200"/></svg>
        <svg width="14" height="16"><circle cx="3" cy="7" r="1.500" fill="none" stroke="#2a8fe0"/><path d="M10 6h2v3l-2 3" fill="none" stroke="#2a8fe0" stroke-width="2"/></svg>
        <svg width="14" height="16"><path d="M1 3.500h12v9H1zM1 6.500h12M1 9.500h12M4.500 3v10M7.500 3v10M10.500 3v10" fill="none" stroke="#2a8fe0"/></svg>
        <svg width="18" height="16"><path d="M6 1l-5 3 2 4 2-1v8h8V7l2 1 2-4-5-3c-1 3-5 3-6 0z" fill="none" stroke="#2a8fe0" stroke-width="1.200"/></svg>
        <svg width="14" height="16"><circle cx="7" cy="5" r="4" fill="none" stroke="#999"/><path d="M5 8c-2 2-3 4-3.500 6.500h11C12 12 11 10 9 8" fill="none" stroke="#999"/></svg>
        <svg width="16" height="16"><circle cx="10" cy="6" r="4.500" fill="none" stroke="#2a8fe0" stroke-width="1.200"/><path d="M7 9l-6 6" stroke="#2a8fe0" stroke-width="1.500"/></svg>
        <svg width="16" height="16"><path d="M6 2c1-2 3-2 4 0 0 1 1 2 2 1 2 0 3 1 2 3-1 1-1 3 0 4 1 2 0 3-2 3-1-1-2 0-2 1-1 2-3 2-4 0 0-1-1-2-2-1-2 0-3-1-2-3 1-1 1-3 0-4-1-2 0-3 2-3 1 1 2 0 2-1z" fill="none" stroke="#2a8fe0" stroke-width="1.200"/><circle cx="8" cy="8" r="2" fill="none" stroke="#2a8fe0"/></svg>
    </div>
</body>
</html>
```

FILE: styles.css
```css
* {
    margin: 0;
    padding: 0;
    box-sizing: border-box;
}

body {
    position: relative;
    display: flex;
    flex-direction: column;
    height: 100vh;
    overflow: hidden;
    background-color: #d8d8d8;
    color: #111;
    font-family: "Liberation Sans", "Noto Sans CJK SC", sans-serif;
    font-size: 11px;
    line-height: 16px;
}

button, select, input {
    font: inherit;
    color: inherit;
    border: none;
    background: none;
    border-radius: 0;
}

ul {
    list-style: none;
}

i {
    font-style: normal;
}

svg {
    display: block;
    flex: none;
}

.defs {
    position: absolute;
}

/* title bar */
.titlebar {
    display: flex;
    height: 22px;
    border-bottom: 1px solid #1d2c4e;
    box-shadow: inset 0 -1px #b9c6d8;
    background:
        radial-gradient(circle at 720px 22px, #79639c 0, transparent 22px),
        radial-gradient(circle at 796px 22px, #a9c3e8 0, transparent 22px),
        radial-gradient(circle at 950px 20px, #b4d6ff 0, #8ab8f2 14px, transparent 26px),
        radial-gradient(circle at 1027px 22px, #2fb3c8 0, #2fb3c8 14px, transparent 24px),
        radial-gradient(circle at 1102px 20px, #94b2e0 0, #86a4d2 14px, transparent 26px),
        linear-gradient(100deg, #91a5bb 0, #aebccb 120px, #8fa1b6 300px, #a5b5c4 460px, #8fa1b6 620px, #6f86a2 660px, #1f4370 700px, #1d3f6b 840px, #3a5a82 1000px, #3a5981 1230px, #1c3d68 1300px, #22446f 1500px, #1c3c64 1600px, #506b8c 1720px, #2b4a72 1920px);
    font-family: "Noto Sans", "Noto Sans CJK SC", sans-serif;
}

.titlebar h1 {
    flex: 1;
    padding: 2px 0 0 5px;
    font-size: 12px;
    font-weight: 400;
    line-height: 18px;
    color: #000;
}

.window-btns {
    display: flex;
    height: 18px;
    margin-right: 3px;
    border: 1px solid #d5dde6;
    border-top: none;
    border-radius: 0 0 5px 5px;
    overflow: hidden;
}

.window-btns button {
    display: flex;
    align-items: center;
    justify-content: center;
    width: 27px;
    border-right: 1px solid #ccd5df;
    background: linear-gradient(#a8b4c2, #66788e 50%, #8291a4);
}

.window-btns .close {
    width: 48px;
    border-right: none;
    background: linear-gradient(#dc9f92, #c0341d 50%, #d9604b);
}

/* menu */
.menu {
    display: flex;
    gap: 12px;
    height: 22px;
    padding: 4px 6px 0;
    font-size: 12px;
}

.menu a {
    color: #111;
    text-decoration: none;
}

/* toolbar */
.toolbar {
    display: flex;
    height: 65px;
    padding-top: 1px;
    font-size: 9px;
    line-height: 11px;
}

.sep {
    flex: none;
    width: 1px;
    height: 23px;
    margin: 19px 10px 0;
    background-color: #b4b4b4;
}

.tool {
    display: flex;
    flex-direction: column;
    align-items: center;
    gap: 1px;
    width: 40px;
    padding-top: 16px;
    white-space: nowrap;
}

.tool.wide {
    width: 46px;
}

.tool:disabled span {
    color: #777;
}

.tool b {
    padding-left: 2px;
    font-size: 7px;
    color: #555;
}

.file-tools {
    display: flex;
    width: 152px;
    padding-left: 8px;
}

.tool.big {
    width: 22px;
    gap: 2px;
}

.tool.clip {
    width: 30px;
    margin-left: 10px;
}

.mini {
    display: flex;
    flex-direction: column;
    gap: 5px;
    width: 14px;
    padding-top: 10px;
    margin-left: 3px;
}

.mini button {
    height: 13px;
}

.tool.clip + .mini {
    margin-left: -3px;
}

.undo {
    display: flex;
    flex-direction: column;
    gap: 6px;
    padding-top: 11px;
    margin-left: 13px;
}

.undo button {
    display: flex;
    align-items: center;
    gap: 5px;
    white-space: nowrap;
}

.select-tools {
    width: 73px;
    padding-top: 11px;
}

.pair {
    display: flex;
    gap: 4px;
    padding-left: 4px;
}

.pair button {
    display: flex;
    justify-content: center;
    width: 30px;
    height: 28px;
    padding-top: 4px;
}

.pair .on {
    background-color: #c9c9c9;
}

.pair-label {
    display: flex;
    justify-content: center;
    gap: 10px;
    padding: 2px 2px 0 0;
}

.pair-label i {
    width: 8px;
    height: 7px;
    border-left: 1px solid #777;
    border-bottom: 1px solid #777;
}

.pair-label .r {
    border-left: none;
    border-right: 1px solid #777;
}

.pick {
    position: relative;
    flex: none;
    height: 20px;
    border: 1px solid #b5b5b5;
}

.pick::after {
    content: "";
    position: absolute;
    right: 3px;
    top: 8px;
    border: 4px solid transparent;
    border-top: 5px solid #8f8f8f;
    border-bottom: none;
}

.pick select {
    display: block;
    width: 100%;
    height: 100%;
    padding-left: 3px;
    appearance: none;
    opacity: 1;
}

.zoom {
    width: 67px;
    padding: 17px 5px 0;
    text-align: center;
}

.zoom .pick {
    height: 22px;
    margin-bottom: 2px;
    background-color: #fff;
    font-size: 12px;
}

.zoom label {
    display: block;
}

.share-tools {
    display: flex;
    margin-left: auto;
    padding-right: 26px;
}

.login {
    display: flex;
    align-items: center;
    gap: 6px;
    height: 24px;
    margin: 15px 0 0 9px;
    font-size: 15px;
    color: #666;
    text-decoration: none;
}

/* style bar */
.stylebar {
    display: flex;
    align-items: center;
    gap: 8px;
    height: 31px;
    padding: 0 8px 1px;
    border-bottom: 1px solid #b5b5b5;
    background-color: #d1d1d1;
    color: #888;
}

.stylebar .sep {
    margin: 0 1px 0 0;
}

.w100 {
    width: 100px;
}

.w90 {
    width: 90px;
}

.w35 {
    width: 35px;
}

.plain {
    padding: 0 1px 0 2px;
}

.group {
    display: flex;
    height: 20px;
    border: 1px solid #b8b8b8;
}

.group button {
    display: flex;
    align-items: center;
    justify-content: center;
    width: 22px;
    border-right: 1px solid #b8b8b8;
    font-size: 13px;
    color: #b8b8b8;
}

.group button:first-child {
    width: 21px;
}

.group button:last-child {
    width: 21px;
    border-right: none;
}

.group .on {
    background-color: #c5e9f6;
}

.group em {
    font-family: "Liberation Serif", serif;
}

.drop {
    display: flex;
    align-items: center;
    justify-content: space-between;
    width: 37px;
    height: 20px;
    padding: 0 4px;
    border: 1px solid #b8b8b8;
}

.drop::after {
    content: "";
    border: 4px solid transparent;
    border-top: 5px solid #aaa;
    border-bottom: none;
}

.coord {
    display: flex;
    align-items: center;
    margin-left: -6px;
    padding-left: 3px;
    color: #333;
}

.coord label {
    width: 14px;
    text-align: center;
}

.coord input {
    width: 34px;
    height: 20px;
    border: 1px solid #b8b8b8;
}

.sep + .coord {
    margin-left: -2px;
}

.coord.last {
    margin-left: -9px;
}

.hide {
    display: flex;
    align-items: center;
    gap: 4px;
}

.hide input {
    width: 13px;
    height: 13px;
    appearance: none;
    border: 1px solid #e2e2e2;
    background-color: #f0f0f0;
}

/* workspace */
.workspace {
    display: flex;
    flex: 1;
    min-height: 0;
}

.left {
    display: flex;
    flex-direction: column;
    width: 328px;
    border-right: 2px solid #b5b5b5;
    background-color: #fff;
}

.pane {
    border-bottom: 2px solid #b5b5b5;
}

.pages {
    height: 301px;
}

.library {
    display: flex;
    flex-direction: column;
    height: 300px;
    background-color: #d8d8d8;
}

.masters {
    flex: 1;
    border-bottom: none;
}

.pane-head {
    display: flex;
    align-items: center;
    height: 25px;
    padding: 0 9px 0 10px;
    background-color: #d8d8d8;
}

.pane-head h2 {
    flex: 1;
    padding-left: 50px;
    font-size: 11px;
    font-weight: 400;
    text-align: center;
    white-space: nowrap;
}

.pane-icons {
    display: flex;
    align-items: center;
    justify-content: flex-end;
    gap: 10px;
    width: 60px;
}

.tree li {
    display: flex;
    align-items: center;
    gap: 8px;
    height: 21px;
    padding: 0 0 2px 6px;
}

.tree .twisty {
    margin-right: 2px;
}

.tree .child {
    padding-left: 42px;
}

.tree .leaf {
    padding-left: 24px;
}

.masters .leaf {
    padding-left: 22px;
}

.tree .current {
    background-color: #c9e9f7;
    font-weight: 700;
}

.lib-pick {
    height: 22px;
    margin: 0 5px 6px 4px;
    font-size: 12px;
}

.lib-pick::after {
    right: 4px;
    top: 9px;
    border-top-color: #000;
}

.lib-pick select {
    padding-left: 5px;
}

.lib-body {
    display: flex;
    flex: 1;
    min-height: 0;
    background-color: #fff;
}

.widgets {
    display: grid;
    grid-template-columns: repeat(4, 77px);
    grid-auto-rows: 74px;
    flex: 1;
    padding-top: 7px;
    margin-left: -2px;
    overflow: hidden;
}

.widgets div {
    display: flex;
    flex-direction: column;
    align-items: center;
    gap: 6px;
}

.ico {
    display: flex;
    align-items: center;
    justify-content: center;
    gap: 2px;
    height: 28px;
}

.hd {
    font-size: 22px;
    font-weight: 700;
    color: #666;
}

.letter {
    height: 18px;
    gap: 4px;
    font-family: "Liberation Serif", serif;
    font-size: 22px;
    font-weight: 700;
    color: #0a9bd8;
}

.low {
    padding: 10px 12px 0 0;
}

.mini-btn {
    width: 28px;
    height: 15px;
    border: 1px solid #888;
    border-radius: 2px;
    font-size: 6px;
    font-weight: 700;
    line-height: 13px;
    text-align: center;
    color: #444;
}

.mini-btn.primary {
    border-color: #1890d0;
    background-color: #1890d0;
    color: #fff;
}

.mini-btn.link {
    border-color: transparent;
    color: #3b86c4;
}

.vscroll {
    display: flex;
    flex-direction: column;
    align-items: center;
    flex: none;
    width: 17px;
    padding: 6px 0;
    background-color: #ececec;
}

.hscroll {
    display: flex;
    align-items: center;
    flex: none;
    height: 17px;
    padding: 0 8px;
    background-color: #ececec;
}

.end {
    margin-top: auto;
}

.hscroll .end {
    margin: 0 0 0 auto;
}

.thumb {
    display: flex;
    align-items: center;
    justify-content: center;
    border: 1px solid #909090;
    border-radius: 2px;
    background: linear-gradient(90deg, #f5f5f5, #dcdcdc 50%, #c8c8c8);
}

.hscroll .thumb {
    height: 15px;
    background: linear-gradient(#f5f5f5, #dcdcdc 50%, #c8c8c8);
}

.tiny {
    width: 15px;
    height: 7px;
    margin-top: 7px;
}

.tall {
    width: 15px;
    height: 33px;
    margin-top: 7px;
}

.long {
    width: 100px;
    margin-left: 5px;
}

.short {
    width: 39px;
    margin-left: 5px;
}

/* editor */
.editor {
    display: flex;
    flex-direction: column;
    flex: 1;
    min-width: 0;
    background-color: #fff;
}

.tabs {
    display: flex;
    height: 25px;
    background-color: #b8b8b8;
}

.tab {
    display: flex;
    align-items: center;
    gap: 8px;
    padding: 0 7px 0 8px;
    border-right: 1px solid #b0b0b0;
    border-bottom: 1px solid #b8b8b8;
    background-color: #d8d8d8;
    color: #666;
}

.tab.active {
    border-bottom-color: #fff;
    background-color: #fff;
    color: #111;
    font-weight: 700;
}

.more {
    margin: 12px 7px 0 auto;
}

.hruler {
    display: flex;
    height: 15px;
    margin-left: 15px;
    border-bottom: 1px solid #b0b0b0;
    overflow: hidden;
}

.hruler span {
    flex: none;
    width: 100px;
    padding-left: 2px;
    font-size: 9px;
    line-height: 12px;
    background:
        linear-gradient(#a8a8a8, #a8a8a8) 0 0 / 1px 14px no-repeat,
        linear-gradient(#a8a8a8, #a8a8a8) 50px 6px / 1px 8px no-repeat,
        repeating-linear-gradient(90deg, #b5b5b5 0, #b5b5b5 1px, transparent 1px, transparent 10px) 0 10px / 100px 4px no-repeat;
}

.stage {
    display: flex;
    flex: 1;
    min-height: 0;
}

.vruler {
    width: 15px;
    border-right: 1px solid #b0b0b0;
    overflow: hidden;
}

.vruler span {
    display: block;
    height: 100px;
    padding: 0 2px 4px 0;
    font-size: 9px;
    line-height: 12px;
    writing-mode: vertical-rl;
    transform: rotate(180deg);
    text-align: right;
    background:
        linear-gradient(#a8a8a8, #a8a8a8) 0 99px / 15px 1px no-repeat,
        linear-gradient(#a8a8a8, #a8a8a8) 0 49px / 8px 1px no-repeat,
        repeating-linear-gradient(0deg, #b5b5b5 0, #b5b5b5 1px, transparent 1px, transparent 10px) 0 0 / 4px 100px no-repeat;
}

.scroller {
    display: flex;
    flex-direction: column;
    flex: 1;
    min-width: 0;
}

.canvas-row {
    display: flex;
    flex: 1;
    min-height: 0;
}

.canvas {
    position: relative;
    flex: 1;
}

/* the master being edited, at 65% */
.design {
    width: 832px;
    color: #d7d7d7;
}

.design-head {
    display: flex;
    align-items: center;
    gap: 16px;
    height: 62px;
    padding: 7px 8px 0;
    border: 1px solid #797979;
    border-left: none;
    background-color: #666;
}

.design-head h3 {
    font-size: 21px;
    line-height: 30px;
}

.design-head span {
    font-family: "Liberation Serif", serif;
    font-size: 25px;
    font-weight: 400;
}

.design-body {
    background-color: #f1f1f1;
}

.design-body ul {
    width: 142px;
    border-right: 1px solid #797979;
    background-color: #666;
}

.design-body li {
    display: flex;
    align-items: center;
    height: 51px;
    padding: 5px 0 0 22px;
    border-bottom: 1px solid #757575;
    font-size: 18px;
    font-weight: 700;
}

.design-body .raised {
    padding-bottom: 14px;
}

.design-body li:last-child {
    height: 54px;
    padding-top: 2px;
}

.guide {
    position: absolute;
    left: 7px;
    top: 570px;
}

/* inspector */
.inspector {
    display: flex;
    flex-direction: column;
    width: 120px;
    border-left: 2px solid #b5b5b5;
    background-color: #f3f3f3;
    overflow: hidden;
    white-space: nowrap;
}

.inspector .pane-head {
    height: 26px;
    border-bottom: 1px solid #b5b5b5;
}

.inspector .pane-head h2 {
    padding-left: 15px;
    text-align: left;
}

.insp-tabs {
    display: flex;
    gap: 1px;
}

.insp-tabs button {
    flex: none;
    width: 82px;
    height: 26px;
    background-color: #d8d8d8;
}

.insp-tabs .on {
    background-color: #1d9ad6;
    color: #fff;
}

.insp-body {
    flex: 1;
    padding-top: 10px;
}

.insp-body h3 {
    display: flex;
    align-items: center;
    gap: 7px;
    padding-left: 9px;
    font-size: 11px;
    font-weight: 400;
}

.add {
    display: flex;
    align-items: center;
    gap: 6px;
    padding: 10px 0 11px 12px;
    font-size: 12px;
}

.add a {
    color: #1584b8;
}

.insp-body li {
    display: flex;
    align-items: center;
    gap: 9px;
    height: 21px;
    padding-left: 30px;
}

.events {
    width: 140px;
    height: 22px;
    margin: 16px 0 15px 10px;
    padding-left: 7px;
    border: 1px solid #b5b5b5;
    font-size: 12px;
    text-align: left;
}

.insp-body h4 {
    padding: 9px 11px;
    border-top: 1px solid #ccc;
    font-size: 11px;
    font-weight: 400;
}

/* taskbar */
.taskbar {
    display: flex;
    align-items: center;
    height: 40px;
    padding-left: 8px;
    border-top: 1px solid #2c3e52;
    box-shadow: inset 0 1px #8fa5ba;
    background: linear-gradient(90deg, #163a60 0, #1d4a6d 100px, #3c5f7e 200px, #23486b 350px, #47647f 400px, #3b5871 450px, #8499b2 475px, #8ca1ba 600px, #7e95ae 650px, #9db1c8 900px, #9aaec5 1600px, #a0b3c9 1760px, #7e93ac 1790px, #183c60 1820px, #1c4167 1920px);
    font-family: "Open Sans", "Noto Sans CJK SC", sans-serif;
    font-size: 12px;
    color: #fff;
}

.launch {
    flex: none;
    margin-right: 26px;
}

.launch.ie {
    margin-right: 16px;
}

.launch.diamond {
    margin-left: 10px;
    margin-right: 24px;
}

.task {
    display: flex;
    align-items: center;
    gap: 4px;
    flex: none;
    width: 115px;
    height: 39px;
    margin-right: 4px;
    padding-left: 8px;
    border: 1px solid #b9c7d4;
    border-radius: 3px;
    background: linear-gradient(165deg, rgba(255, 255, 255, .5), rgba(255, 255, 255, .15) 55%, rgba(255, 255, 255, .05) 56%);
    box-shadow: 0 0 0 1px #34485c;
    white-space: nowrap;
}

.task.light {
    width: 114px;
    padding-left: 6px;
    background: linear-gradient(165deg, rgba(255, 255, 255, .5), rgba(255, 255, 255, .25) 50%, rgba(255, 255, 255, .1) 51%);
}

.task.current {
    background: linear-gradient(165deg, rgba(255, 255, 255, .85), rgba(255, 255, 255, .5) 50%, rgba(255, 255, 255, .35) 51%);
}

.task-group {
    display: flex;
    margin: 0 4px 0 -9px;
    border: 1px solid #b9c7d4;
    border-radius: 3px;
    box-shadow: 0 0 0 1px #34485c;
}

.task-group .task {
    gap: 10px;
    width: 115px;
    height: 37px;
    margin: 0;
    border: none;
    border-right: 1px solid #8195a9;
    border-radius: 0;
    box-shadow: none;
}

.task-group .task.light {
    width: 115px;
}

.task-group .task:last-child {
    border-right: none;
}

.tray {
    display: flex;
    align-items: center;
    height: 100%;
    margin-left: auto;
}

.lang {
    padding: 0 7px 6px 0;
    font-family: "Liberation Mono", monospace;
    font-size: 11px;
}

.up {
    margin: 0 6px 6px 0;
}

.tray-icons {
    display: flex;
    gap: 8px;
    margin-left: 9px;
}

.clock {
    width: 78px;
    margin-left: 5px;
    text-align: center;
}

.clock time {
    display: block;
    line-height: 18px;
}

.show-desktop {
    width: 15px;
    height: 100%;
    border: 1px solid #7d92a8;
    background: linear-gradient(135deg, #7189a0, #1c3f62 60%);
}

/* floating */
.upload {
    position: absolute;
    top: 27px;
    right: 107px;
    display: flex;
    width: 104px;
    height: 25px;
    border: 1px solid #1b78be;
    border-radius: 3px;
    background: linear-gradient(#3aabf2, #1389dd);
    overflow: hidden;
    box-shadow: 0 1px 2px #999;
}

.upload span {
    flex: 1;
    font-size: 12px;
    line-height: 25px;
    color: #33678e;
    background: linear-gradient(#e4f5ff, #c2e7fc 50%, #98d5f8 51%, #a5dcfb);
}

.ime {
    position: absolute;
    right: 9px;
    top: 913px;
    display: flex;
    align-items: center;
    justify-content: space-between;
    width: 202px;
    height: 24px;
    padding-right: 3px;
    border: 1px solid #ccc;
    border-left: none;
    background-color: #fff;
    font-size: 15px;
    color: #2a8fe0;
}

.ime .logo {
    background: linear-gradient(90deg, #0873c9, #2491ea);
}
```
